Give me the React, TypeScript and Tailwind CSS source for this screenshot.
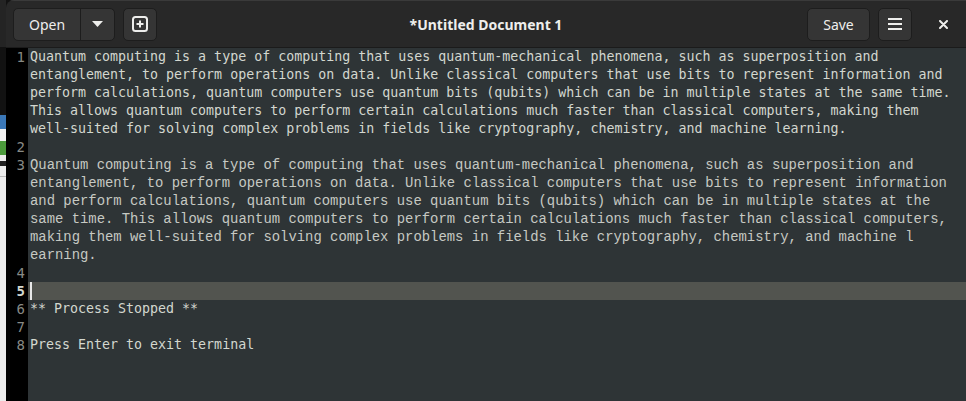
import React from "react";

type Row = {
  num?: number;
  text: string;
  kind?: "a" | "b";
  current?: boolean;
};

const para1 = [
  "Quantum computing is a type of computing that uses quantum-mechanical phenomena, such as superposition and",
  "entanglement, to perform operations on data. Unlike classical computers that use bits to represent information and",
  "perform calculations, quantum computers use quantum bits (qubits) which can be in multiple states at the same time.",
  "This allows quantum computers to perform certain calculations much faster than classical computers, making them",
  "well-suited for solving complex problems in fields like cryptography, chemistry, and machine learning.",
];

const para2 = [
  "Quantum computing is a type of computing that uses quantum-mechanical phenomena, such as superposition and",
  "entanglement, to perform operations on data. Unlike classical computers that use bits to represent information",
  "and perform calculations, quantum computers use quantum bits (qubits) which can be in multiple states at the",
  "same time. This allows quantum computers to perform certain calculations much faster than classical computers,",
  "making them well-suited for solving complex problems in fields like cryptography, chemistry, and machine l",
  "earning.",
];

const rows: Row[] = [
  ...para1.map((t, i) => ({ num: i === 0 ? 1 : undefined, text: t })),
  { num: 2, text: "" },
  ...para2.map((t, i) => ({ num: i === 0 ? 3 : undefined, text: t, kind: "b" as const })),
  { num: 4, text: "" },
  { num: 5, text: "", current: true },
  { num: 6, text: "** Process Stopped **" },
  { num: 7, text: "" },
  { num: 8, text: "Press Enter to exit terminal" },
];

const mono = '"DejaVu Sans Mono", monospace';

function BackgroundStrip() {
  // sliver of the window behind this one
  return (
    <div className="w-[6px] flex flex-col shrink-0">
      <div className="h-[47px] bg-[#242424]" />
      <div className="h-[68px] bg-[#121212]" />
      <div className="h-[14px] bg-[#3b78b8]" />
      <div className="h-[12px] bg-[#f2f2f2]" />
      <div className="h-[14px] bg-[#4c9a3c]" />
      <div className="flex-1 bg-[#ececec] flex flex-col">
        <div className="mt-[6px] h-[5px] w-[6px] bg-[#202020]" />
        <div className="mt-[10px] h-px bg-[#b9b9b9]" />
      </div>
    </div>
  );
}

function HeaderButton({ children, className = "" }: { children: React.ReactNode; className?: string }) {
  return (
    <div
      className={
        "h-[33px] flex items-center justify-center rounded-[5px] bg-[#353535] border border-[#1d1d1d] text-[#eeeeec] " +
        className
      }
    >
      {children}
    </div>
  );
}

function Header() {
  return (
    <div
      className="h-[47px] shrink-0 bg-[#282828] border-t border-[#3a3a3a] flex items-center pl-[7px] pr-[7px] relative"
      style={{ fontFamily: '"Noto Sans", Inter, sans-serif' }}
    >
      <div className="h-[33px] w-[102px] flex rounded-[5px] bg-[#353535] border border-[#1d1d1d] text-[#eeeeec]">
        <div className="w-[67px] flex items-center justify-center text-[14px] border-r border-[#1d1d1d]">Open</div>
        <div className="flex-1 flex items-center justify-center">
          <svg width="11" height="6" viewBox="0 0 11 6">
            <path d="M0 0 H11 L5.5 6 Z" fill="#eeeeec" />
          </svg>
        </div>
      </div>
      <HeaderButton className="w-[34px] ml-[8px]">
        <svg width="16" height="16" viewBox="0 0 16 16" fill="none">
          <rect x="1" y="1" width="14" height="14" rx="2.5" stroke="#eeeeec" strokeWidth="2" />
          <path d="M8 4.5 V11.5 M4.5 8 H11.5" stroke="#eeeeec" strokeWidth="2" />
        </svg>
      </HeaderButton>
      <div className="absolute left-0 right-0 top-0 h-[47px] flex items-center justify-center pointer-events-none">
        <span className="text-[14px] font-bold text-[#eeeeec]">*Untitled Document 1</span>
      </div>
      <div className="ml-auto flex items-center">
        <HeaderButton className="w-[63px] text-[14px]">Save</HeaderButton>
        <HeaderButton className="w-[34px] ml-[8px]">
          <svg width="14" height="14" viewBox="0 0 14 14">
            <rect x="0" y="1" width="14" height="2" fill="#eeeeec" />
            <rect x="0" y="6" width="14" height="2" fill="#eeeeec" />
            <rect x="0" y="11" width="14" height="2" fill="#eeeeec" />
          </svg>
        </HeaderButton>
        <div className="w-[32px] ml-[15px] h-[33px] flex items-center justify-center">
          <svg width="9" height="9" viewBox="0 0 9 9">
            <path d="M1 1 L8 8 M8 1 L1 8" stroke="#eeeeec" strokeWidth="2" strokeLinecap="round" />
          </svg>
        </div>
      </div>
    </div>
  );
}

function Editor() {
  return (
    <div className="flex-1 flex flex-col bg-[#2e3436] border-t border-[#1b1b1b] overflow-hidden">
      {rows.map((r, i) => (
        <div key={i} className="flex h-[18px] shrink-0">
          <div
            className={
              "w-[22px] shrink-0 bg-black text-right pr-[3px] text-[14px] leading-[18px] " +
              (r.current ? "text-[#d3d7cf] font-bold" : "text-[#888a85]")
            }
            style={{ fontFamily: mono }}
          >
            {r.num ?? ""}
          </div>
          {r.kind === "b" ? (
            <div
              className="flex-1 pl-[2px] whitespace-pre text-[13.9px] leading-[18px] text-[#c6c9c3]"
              style={{ fontFamily: '"Liberation Mono", monospace' }}
            >
              {r.text}
            </div>
          ) : (
            <div
              className={
                "flex-1 pl-[2px] relative whitespace-pre text-[13.3px] leading-[18px] text-[#d3d7cf] " +
                (r.current ? "bg-[#52544f]" : "")
              }
              style={{ fontFamily: mono }}
            >
              {r.current && <div className="absolute left-[2px] top-0 h-[18px] w-[2px] bg-[#e8e8e8]" />}
              {r.text}
            </div>
          )}
        </div>
      ))}
      <div className="flex-1 flex">
        <div className="w-[22px] bg-black" />
      </div>
    </div>
  );
}

export default function App() {
  return (
    <div className="w-[966px] h-[401px] flex overflow-hidden bg-[#121212]">
      <BackgroundStrip />
      <div className="flex-1 flex flex-col rounded-tl-[8px] overflow-hidden">
        <Header />
        <Editor />
      </div>
    </div>
  );
}
